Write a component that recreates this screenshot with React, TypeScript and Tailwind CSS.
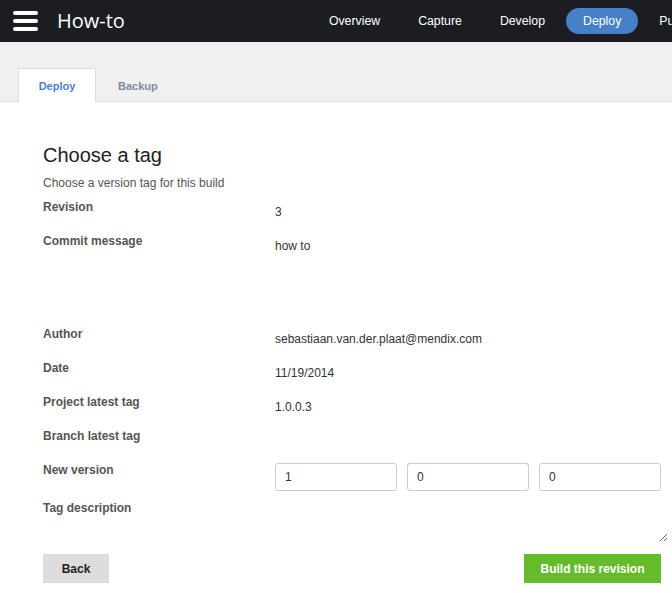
import React from 'react';

const navItems = ['Overview', 'Capture', 'Develop', 'Deploy', 'Publish'];

const Row: React.FC<{ label: string; h: string; children?: React.ReactNode }> = ({ label, h, children }) => (
  <div className={`flex ${h}`}>
    <div className="w-[232px] shrink-0 text-[12px] font-bold leading-4 text-[#555]">{label}</div>
    <div className="flex-1">{children}</div>
  </div>
);

const Value: React.FC<{ children: React.ReactNode }> = ({ children }) => (
  <div className="pt-[5px] text-[12px] leading-4 text-[#333]">{children}</div>
);

export default function App() {
  return (
    <div className="w-[672px] h-[593px] overflow-hidden bg-white font-['Liberation_Sans',Arial,sans-serif]">
      {/* Top bar */}
      <header className="flex h-[42px] items-center overflow-hidden bg-[#1c1d22] whitespace-nowrap">
        <div className="ml-[13px] flex w-[25px] shrink-0 flex-col gap-[4px]">
          <span className="block h-[4px] rounded-full bg-white" />
          <span className="block h-[4px] rounded-full bg-white" />
          <span className="block h-[4px] rounded-full bg-white" />
        </div>
        <div className="ml-[19px] shrink-0 font-['Open_Sans',sans-serif] text-[20px] leading-none text-white">How-to</div>
        <nav className="ml-[187px] flex shrink-0 gap-[4px]">
          {navItems.map((n) => (
            <span
              key={n}
              className={`flex h-[26px] shrink-0 items-center rounded-full px-[17px] text-[12.3px] text-white ${n === 'Deploy' ? 'bg-[#4580c8]' : ''}`}
            >
              {n}
            </span>
          ))}
        </nav>
      </header>

      {/* Tabs */}
      <div className="flex h-[60px] items-end border-b border-[#dddddd] bg-[#f0f0f0] pl-[18px]">
        <div className="-mb-px flex h-[34px] w-[78px] items-center justify-center border border-b-0 border-[#dddddd] bg-white pt-[2px] text-[11px] font-bold text-[#4a7fd0]">
          Deploy
        </div>
        <div className="flex h-[33px] items-center pl-[22px] pt-[3px] text-[11px] font-bold text-[#7f8a9a]">Backup</div>
      </div>

      {/* Content */}
      <div className="pl-[43px] pr-[11px] pt-[41px]">
        <h1 className="text-[20px] leading-6 text-[#222]">Choose a tag</h1>
        <p className="mt-[8px] text-[12px] leading-4 text-[#555]">Choose a version tag for this build</p>

        <div className="mt-[8px]">
          <Row label="Revision" h="h-[34px]">
            <Value>3</Value>
          </Row>
          <Row label="Commit message" h="h-[93px]">
            <Value>how to</Value>
          </Row>
          <Row label="Author" h="h-[34px]">
            <Value>sebastiaan.van.der.plaat@mendix.com</Value>
          </Row>
          <Row label="Date" h="h-[34px]">
            <Value>11/19/2014</Value>
          </Row>
          <Row label="Project latest tag" h="h-[34px]">
            <Value>1.0.0.3</Value>
          </Row>
          <Row label="Branch latest tag" h="h-[34px]" />
          <Row label="New version" h="h-[38px]">
            <div className="mt-px grid grid-cols-3 gap-[10px]">
              {['1', '0', '0'].map((v, i) => (
                <input
                  key={i}
                  defaultValue={v}
                  className="h-[28px] w-full rounded-[3px] border border-[#cccccc] px-[9px] text-[12px] text-[#333] outline-none"
                />
              ))}
            </div>
          </Row>
          <Row label="Tag description" h="h-[43px]">
            <textarea className="block h-[42px] w-[393px] resize border-0 bg-white outline-none" />
          </Row>
        </div>

        <div className="mt-[11px] flex justify-between">
          <button className="h-[29px] w-[66px] bg-[#dddddd] text-[12px] font-bold text-[#222]">Back</button>
          <button className="h-[29px] w-[137px] bg-[#66bb2a] text-[12px] font-bold text-white">Build this revision</button>
        </div>
      </div>
    </div>
  );
}
